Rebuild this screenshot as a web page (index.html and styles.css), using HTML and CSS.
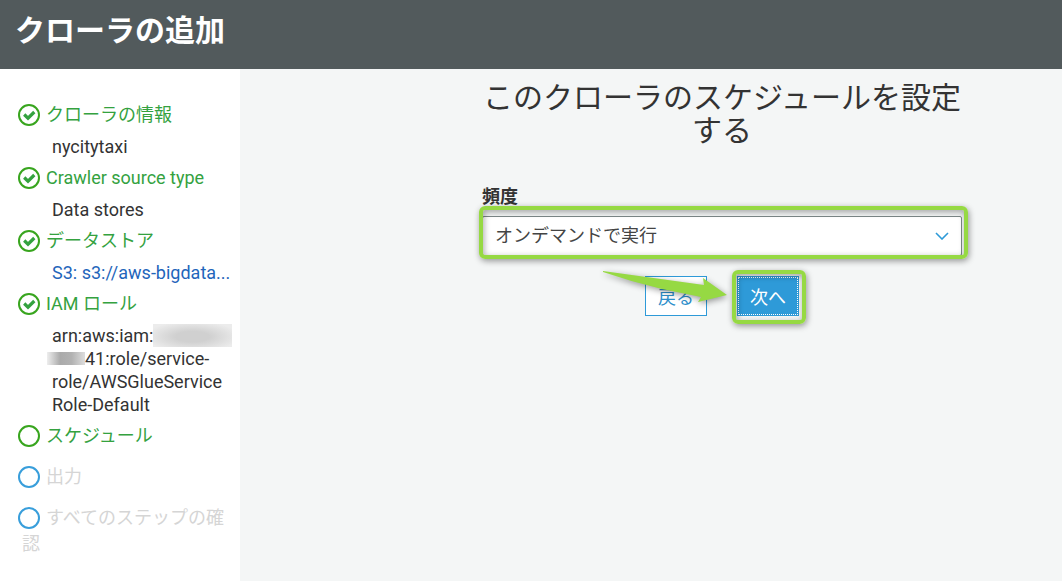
FILE: index.html
```
<!DOCTYPE html>
<html lang="ja">

<head>
    <meta charset="UTF-8">
    <meta name="viewport" content="width=device-width, initial-scale=1.0">
    <title>クローラの追加</title>

    <link rel="stylesheet" href="styles.css">
</head>

<body>
    <svg class="symbols" aria-hidden="true">
        <symbol id="circle" viewBox="0 0 24 24">
            <circle cx="12" cy="12" r="10" fill="none" stroke="currentColor" stroke-width="2" />
        </symbol>
        <symbol id="check" viewBox="0 0 24 24">
            <circle cx="12" cy="12" r="10" fill="none" stroke="currentColor" stroke-width="2" />
            <path d="M7.2 11.5l3.8 3.7 6.3-6.2" fill="none" stroke="#34a23f" stroke-width="3.2" />
        </symbol>
    </svg>

    <header class="header">
        <h1>クローラの追加</h1>
    </header>

    <div class="wizard">
        <nav class="sidebar">
            <ul class="steps">
                <li>
                    <div class="step"><svg class="icon"><use href="#check" /></svg>クローラの情報</div>
                    <div class="detail">nycitytaxi</div>
                </li>
                <li>
                    <div class="step"><svg class="icon"><use href="#check" /></svg>Crawler source type</div>
                    <div class="detail">Data stores</div>
                </li>
                <li>
                    <div class="step"><svg class="icon"><use href="#check" /></svg>データストア</div>
                    <div class="detail"><a href="#">S3: s3://aws-bigdata...</a></div>
                </li>
                <li>
                    <div class="step"><svg class="icon"><use href="#check" /></svg>IAM ロール</div>
                    <div class="detail">
                        arn:aws:iam:<span class="mask mask-account"></span><br>
                        <span class="mask mask-rest"></span>41:role/service-<br>
                        role/AWSGlueService<br>
                        Role-Default
                    </div>
                </li>
                <li>
                    <div class="step"><svg class="icon"><use href="#circle" /></svg>スケジュール</div>
                </li>
                <li>
                    <div class="step pending"><svg class="icon"><use href="#circle" /></svg>出力</div>
                </li>
                <li>
                    <div class="step pending"><svg class="icon"><use href="#circle" /></svg>すべてのステップの確認</div>
                </li>
            </ul>
        </nav>

        <main class="content">
            <form class="schedule">
                <h2>このクローラのスケジュールを設定する</h2>

                <label for="frequency">頻度</label>
                <div class="select-box">
                    <select id="frequency">
                        <option>オンデマンドで実行</option>
                    </select>
                    <svg class="chevron" viewBox="0 0 14 8">
                        <path d="M1 1l6 6 6-6" fill="none" stroke="#2e9ad8" stroke-width="1.6" />
                    </svg>
                    <span class="marker"></span>
                </div>

                <div class="buttons">
                    <button type="button" class="btn">戻る</button>
                    <div class="next-box">
                        <button type="button" class="btn primary">次へ</button>
                        <span class="marker"></span>
                        <svg class="arrow" viewBox="0 0 125 34">
                            <path d="M1 1L102 15 101 8 125 25 96 32 99 27 60 19Q30 12 1 2Z" fill="#96d943" />
                        </svg>
                    </div>
                </div>
            </form>
        </main>
    </div>
</body>

</html>
```
FILE: styles.css
```
* {
    box-sizing: border-box;
}

body {
    margin: 0;
    min-height: 100vh;
    display: flex;
    flex-direction: column;
    font-family: Roboto, "Noto Sans CJK JP", sans-serif;
    font-size: 18px;
    color: #333;
    background: #f4f6f6;
}

.symbols {
    position: absolute;
    width: 0;
    height: 0;
}

.header {
    height: 69px;
    padding: 13px 15px;
    background: #525a5c;
}

.header h1 {
    margin: 0;
    font-size: 30px;
    line-height: 36px;
    color: #fff;
}

.wizard {
    display: flex;
    flex: 1;
}

.sidebar {
    flex: none;
    width: 240px;
    padding: 30px 8px 24px 22px;
    background: #fff;
}

.steps {
    list-style: none;
    margin: 0;
    padding: 0;
}

.step {
    padding: 3px 0;
    line-height: 26px;
    color: #34a23f;
}

.step.pending {
    margin-top: 9px;
    color: #d5d5d5;
}

.icon {
    width: 24px;
    height: 24px;
    margin: 0 5px 0 -5px;
    vertical-align: -6px;
    color: #38a51e;
}

.pending .icon {
    color: #389edb;
}

.detail {
    padding: 4px 0 4px 30px;
    line-height: 23px;
    white-space: nowrap;
}

.detail a {
    color: #1f66bb;
    text-decoration: none;
}

.mask {
    display: inline-block;
}

.mask-account {
    width: 79px;
    height: 23px;
    vertical-align: top;
    background: radial-gradient(ellipse at 50% 55%, #d0d0d0 30%, #ececec 85%);
}

.mask-rest {
    width: 38px;
    height: 13px;
    margin-left: -5px;
    background: linear-gradient(90deg, #eee, #aaa 35%, #b2b2b2 65%, #ddd);
}

.content {
    flex: 1;
    padding: 12px 100px 40px 242px;
}

.schedule {
    max-width: 480px;
    margin: 0 auto;
}

.schedule h2 {
    margin: 0 0 38px;
    font-size: 30px;
    font-weight: 400;
    line-height: 33px;
    text-align: center;
}

.schedule label {
    display: block;
    line-height: 24px;
    margin-bottom: 7px;
    font-weight: 700;
}

.select-box {
    position: relative;
}

.select-box select {
    display: block;
    width: 100%;
    height: 40px;
    padding: 0 40px 2px 12px;
    border: 1px solid #7c8787;
    border-radius: 2px;
    background: #fff;
    font: inherit;
    color: #444;
    appearance: none;
}

.chevron {
    position: absolute;
    right: 13px;
    top: 16px;
    width: 14px;
    height: 8px;
}

.marker {
    position: absolute;
    border: 4px solid #96d943;
    border-radius: 6px;
    box-shadow: 1px 2px 6px rgba(0, 0, 0, 0.4), inset 1px 2px 6px rgba(0, 0, 0, 0.35);
    pointer-events: none;
}

.select-box .marker {
    inset: -10px -6px -3px -3px;
}

.buttons {
    display: flex;
    justify-content: center;
    gap: 30px;
    margin-top: 20px;
}

.btn {
    display: block;
    width: 62px;
    height: 40px;
    padding: 0;
    border: 1px solid #2e9ad8;
    background: #fff;
    font: inherit;
    color: #2e8fcb;
}

.btn.primary {
    background: #2e9ad8;
    color: #fff;
    outline: 1px dotted #fff;
    outline-offset: -2px;
}

.next-box {
    position: relative;
}

.next-box .marker {
    inset: -6px -7px -8px -5px;
}

.arrow {
    position: absolute;
    left: -135px;
    top: -6px;
    width: 125px;
    height: 34px;
    overflow: visible;
    filter: drop-shadow(1px 2px 3px rgba(0, 0, 0, 0.4));
}
```
